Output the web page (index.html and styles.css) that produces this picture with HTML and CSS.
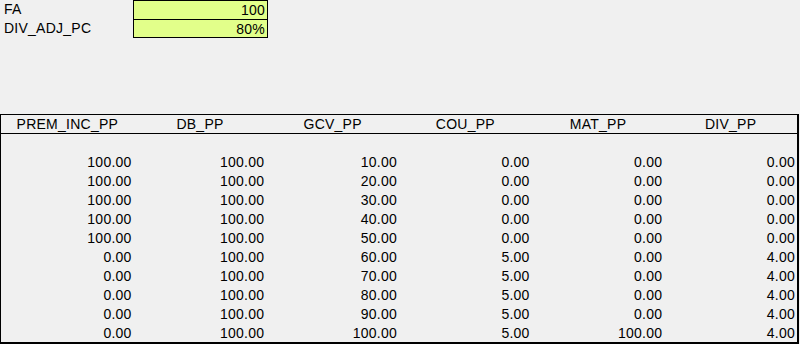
FILE: index.html
```html
<!DOCTYPE html>
<html>
<head>
<meta charset="utf-8">
<link rel="stylesheet" href="styles.css">
</head>
<body>
<div class="params">
  <div class="param-row">
    <div class="param-label">FA</div>
    <div class="param-value">100</div>
  </div>
  <div class="param-row">
    <div class="param-label">DIV_ADJ_PC</div>
    <div class="param-value">80%</div>
  </div>
</div>
<div class="grid">
  <div class="grid-head">
    <div class="hcell">PREM_INC_PP</div>
    <div class="hcell">DB_PP</div>
    <div class="hcell">GCV_PP</div>
    <div class="hcell">COU_PP</div>
    <div class="hcell">MAT_PP</div>
    <div class="hcell">DIV_PP</div>
  </div>
  <div class="blank-row"></div>
  <div class="grid-body">
    <div class="cell">100.00</div><div class="cell">100.00</div><div class="cell">10.00</div><div class="cell">0.00</div><div class="cell">0.00</div><div class="cell">0.00</div>
    <div class="cell">100.00</div><div class="cell">100.00</div><div class="cell">20.00</div><div class="cell">0.00</div><div class="cell">0.00</div><div class="cell">0.00</div>
    <div class="cell">100.00</div><div class="cell">100.00</div><div class="cell">30.00</div><div class="cell">0.00</div><div class="cell">0.00</div><div class="cell">0.00</div>
    <div class="cell">100.00</div><div class="cell">100.00</div><div class="cell">40.00</div><div class="cell">0.00</div><div class="cell">0.00</div><div class="cell">0.00</div>
    <div class="cell">100.00</div><div class="cell">100.00</div><div class="cell">50.00</div><div class="cell">0.00</div><div class="cell">0.00</div><div class="cell">0.00</div>
    <div class="cell">0.00</div><div class="cell">100.00</div><div class="cell">60.00</div><div class="cell">5.00</div><div class="cell">0.00</div><div class="cell">4.00</div>
    <div class="cell">0.00</div><div class="cell">100.00</div><div class="cell">70.00</div><div class="cell">5.00</div><div class="cell">0.00</div><div class="cell">4.00</div>
    <div class="cell">0.00</div><div class="cell">100.00</div><div class="cell">80.00</div><div class="cell">5.00</div><div class="cell">0.00</div><div class="cell">4.00</div>
    <div class="cell">0.00</div><div class="cell">100.00</div><div class="cell">90.00</div><div class="cell">5.00</div><div class="cell">0.00</div><div class="cell">4.00</div>
    <div class="cell">0.00</div><div class="cell">100.00</div><div class="cell">100.00</div><div class="cell">5.00</div><div class="cell">100.00</div><div class="cell">4.00</div>
  </div>
</div>
</body>
</html>
```

FILE: styles.css
```css
html, body {
  margin: 0;
  padding: 0;
  background: #f0f0f0;
}
body {
  width: 800px;
  height: 344px;
  overflow: hidden;
  font-family: "Liberation Sans", Arial, sans-serif;
  font-size: 14px;
  letter-spacing: 0.25px;
  color: #000;
}
.params {
  display: flex;
  flex-direction: column;
  height: 114px;
}
.param-row {
  display: flex;
  height: 19px;
}
.param-label {
  width: 129px;
  padding-left: 4px;
  line-height: 19px;
}
.param-value {
  width: 131px;
  padding-right: 2px;
  background: #e2ff8a;
  border: 1px solid #000;
  border-bottom: none;
  text-align: right;
  line-height: 18px;
}
.param-row:last-child .param-value {
  border-bottom: 1px solid #000;
}
.grid {
  width: 796px;
  height: 227px;
  border-top: 1px solid #000;
  border-left: 1px solid #000;
  border-right: 2px solid #000;
  border-bottom: 2px solid #000;
}
.grid-head {
  display: grid;
  grid-template-columns: repeat(6, 1fr);
  height: 18px;
  border-bottom: 1px solid #000;
}
.hcell {
  text-align: center;
  line-height: 19px;
  height: 18px;
}
.blank-row {
  height: 19px;
}
.grid-body {
  display: grid;
  grid-template-columns: repeat(6, 1fr);
  grid-auto-rows: 19px;
}
.cell {
  text-align: right;
  padding-right: 2px;
  line-height: 19px;
}
```
